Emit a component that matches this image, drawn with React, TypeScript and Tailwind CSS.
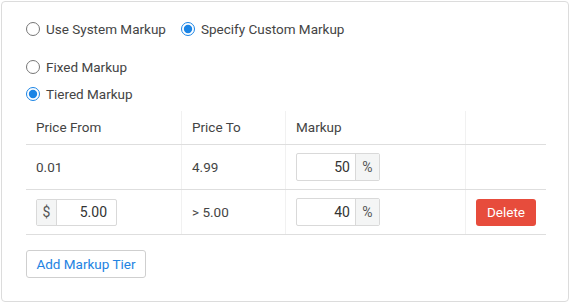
import { useState } from "react";

type Tier = { from: string; to: string; markup: string };

export default function App() {
  const [mode, setMode] = useState<"system" | "custom">("custom");
  const [kind, setKind] = useState<"fixed" | "tiered">("tiered");
  const [tiers] = useState<Tier[]>([
    { from: "0.01", to: "4.99", markup: "50" },
    { from: "5.00", to: "> 5.00", markup: "40" },
  ]);

  return (
    <div className="p-px font-['Roboto',sans-serif] text-[13.5px] text-[#444]">
      <div className="h-[301px] w-[568px] rounded-[4px] border border-[#dcdcdc] bg-white pl-[24px] pt-[17px]">
        {/* markup source */}
        <div className="flex h-[20px] items-center gap-[15px]">
          <label className="flex items-center gap-[6px]">
            <input
              type="radio"
              className="m-0 h-[14px] w-[14px] accent-[#1a84e5]"
              checked={mode === "system"}
              onChange={() => setMode("system")}
            />
            <span>Use System Markup</span>
          </label>
          <label className="flex items-center gap-[6px]">
            <input
              type="radio"
              className="m-0 h-[14px] w-[14px] accent-[#1a84e5]"
              checked={mode === "custom"}
              onChange={() => setMode("custom")}
            />
            <span>Specify Custom Markup</span>
          </label>
        </div>

        <div className="mt-[18px] flex flex-col gap-[7px]">
          <label className="flex h-[20px] items-center gap-[6px]">
            <input
              type="radio"
              className="m-0 h-[14px] w-[14px] accent-[#1a84e5]"
              checked={kind === "fixed"}
              onChange={() => setKind("fixed")}
            />
            <span>Fixed Markup</span>
          </label>
          <label className="flex h-[20px] items-center gap-[6px]">
            <input
              type="radio"
              className="m-0 h-[14px] w-[14px] accent-[#1a84e5]"
              checked={kind === "tiered"}
              onChange={() => setKind("tiered")}
            />
            <span>Tiered Markup</span>
          </label>
        </div>

        {/* tiers table */}
        <div className="mt-[7px] w-[520px]">
          <div className="grid h-[34px] grid-cols-[156px_104px_180px_80px] border-b border-[#dedede]">
            <div className="flex items-center border-r border-[#f1f1f1] px-[10px]">Price From</div>
            <div className="flex items-center border-r border-[#f1f1f1] px-[10px]">Price To</div>
            <div className="flex items-center border-r border-[#f1f1f1] px-[10px]">Markup</div>
            <div />
          </div>

          {tiers.map((tier, i) => (
            <div
              key={i}
              className="grid h-[45px] grid-cols-[156px_104px_180px_80px] border-b border-[#dedede]"
            >
              <div className="flex items-center border-r border-[#f1f1f1] px-[10px]">
                {i === 0 ? (
                  tier.from
                ) : (
                  <div className="flex h-[27px] rounded-[2px] border border-[#d9d9d9] text-[14px]">
                    <span className="flex w-[20px] items-center justify-center border-r border-[#d9d9d9] bg-[#f4f5f5] text-[#555]">
                      $
                    </span>
                    <span className="flex w-[59px] items-center justify-end pr-[9px] text-[#333]">
                      {tier.from}
                    </span>
                  </div>
                )}
              </div>
              <div className="flex items-center border-r border-[#f1f1f1] px-[10px]">{tier.to}</div>
              <div className="flex items-center border-r border-[#f1f1f1] px-[10px]">
                <div className="flex h-[28px] rounded-[2px] border border-[#d9d9d9] text-[14px]">
                  <span className="flex w-[58px] items-center justify-end pr-[5px] text-[#333]">
                    {tier.markup}
                  </span>
                  <span className="flex w-[24px] items-center justify-center border-l border-[#d9d9d9] bg-[#f4f5f5] text-[#555]">
                    %
                  </span>
                </div>
              </div>
              <div className="flex items-center pl-[10px]">
                {i > 0 && (
                  <button className="h-[27px] w-[60px] rounded-[3px] bg-[#e74c3c] text-[13.5px] text-white">
                    Delete
                  </button>
                )}
              </div>
            </div>
          ))}
        </div>

        <button className="mt-[15px] h-[28px] w-[120px] rounded-[3px] border border-[#cfcfcf] bg-white text-[13.5px] text-[#2383e2]">
          Add Markup Tier
        </button>
      </div>
    </div>
  );
}
